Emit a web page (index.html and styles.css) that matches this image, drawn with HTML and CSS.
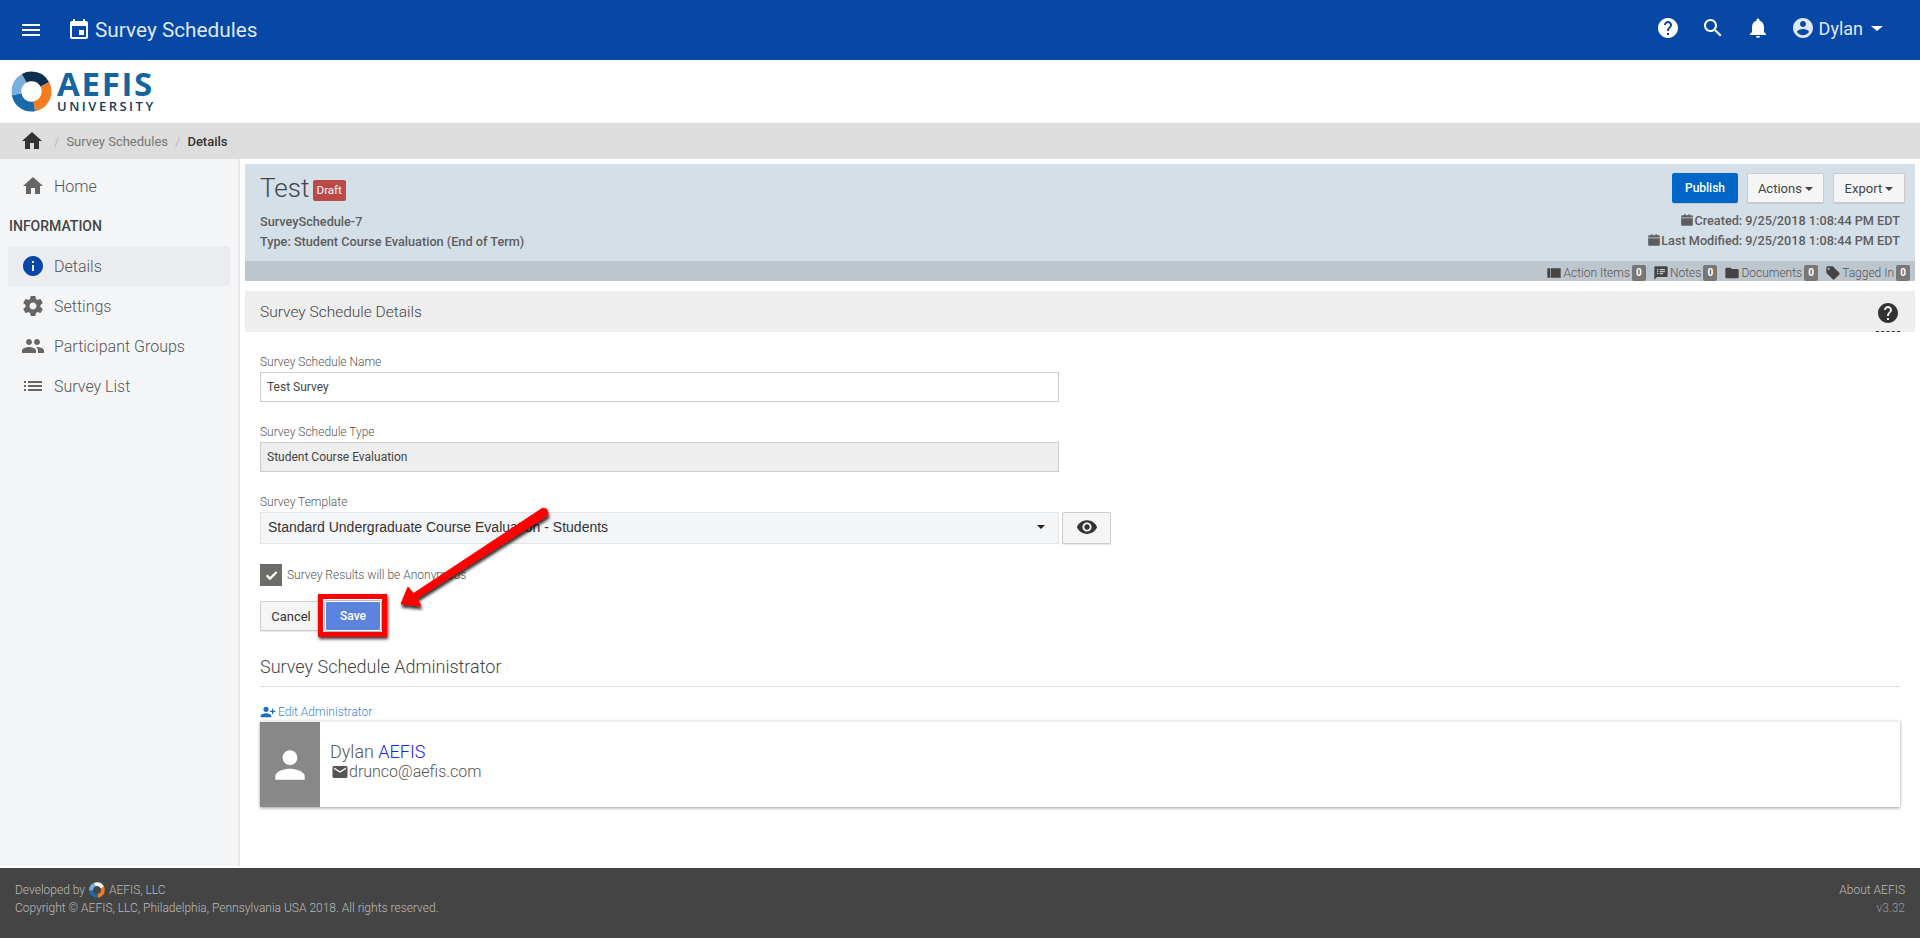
FILE: index.html
```html
<!DOCTYPE html>
<html lang="en">
<head>
    <meta charset="UTF-8">
    <meta name="viewport" content="width=device-width, initial-scale=1.0">
    <title>Survey Schedules</title>
    <link rel="stylesheet" href="styles.css">
</head>
<body>
    <svg class="icon-defs" aria-hidden="true">
        <symbol id="i-menu" viewBox="0 0 24 24"><path d="M3 18h18v-2H3v2zm0-5h18v-2H3v2zm0-7v2h18V6H3z"/></symbol>
        <symbol id="i-event" viewBox="0 0 24 24"><path d="M17 12h-5v5h5v-5zM16 1v2H8V1H6v2H5c-1.11 0-1.99.9-1.99 2L3 19c0 1.1.89 2 2 2h14c1.1 0 2-.9 2-2V5c0-1.1-.9-2-2-2h-1V1h-2zm3 18H5V8h14v11z"/></symbol>
        <symbol id="i-help" viewBox="0 0 24 24"><path d="M12 2C6.48 2 2 6.48 2 12s4.48 10 10 10 10-4.48 10-10S17.52 2 12 2zm1 17h-2v-2h2v2zm2.07-7.75l-.9.92C13.45 12.9 13 13.5 13 15h-2v-.5c0-1.1.45-2.1 1.17-2.83l1.24-1.26c.37-.36.59-.86.59-1.41 0-1.1-.9-2-2-2s-2 .9-2 2H8c0-2.21 1.79-4 4-4s4 1.79 4 4c0 .88-.36 1.68-.93 2.25z"/></symbol>
        <symbol id="i-search" viewBox="0 0 24 24"><path d="M15.5 14h-.79l-.28-.27C15.41 12.59 16 11.11 16 9.5 16 5.91 13.09 3 9.5 3S3 5.91 3 9.5 5.91 16 9.5 16c1.61 0 3.09-.59 4.23-1.57l.27.28v.79l5 4.99L20.49 19l-4.99-5zm-6 0C7.01 14 5 11.99 5 9.5S7.01 5 9.5 5 14 7.01 14 9.5 11.99 14 9.5 14z"/></symbol>
        <symbol id="i-bell" viewBox="0 0 24 24"><path d="M12 22c1.1 0 2-.9 2-2h-4c0 1.1.89 2 2 2zm6-6v-5c0-3.07-1.64-5.64-4.5-6.32V4c0-.83-.67-1.5-1.5-1.5s-1.5.67-1.5 1.5v.68C7.63 5.36 6 7.92 6 11v5l-2 2v1h16v-1l-2-2z"/></symbol>
        <symbol id="i-account" viewBox="0 0 24 24"><path d="M12 2C6.48 2 2 6.48 2 12s4.48 10 10 10 10-4.48 10-10S17.52 2 12 2zm0 3c1.66 0 3 1.34 3 3s-1.34 3-3 3-3-1.34-3-3 1.34-3 3-3zm0 14.2c-2.5 0-4.71-1.28-6-3.22.03-1.99 4-3.08 6-3.08 1.99 0 5.97 1.09 6 3.08-1.29 1.94-3.5 3.22-6 3.22z"/></symbol>
        <symbol id="i-home" viewBox="0 0 24 24"><path d="M10 20v-6h4v6h5v-8h3L12 3 2 12h3v8z"/></symbol>
        <symbol id="i-info" viewBox="0 0 24 24"><path d="M12 2C6.48 2 2 6.48 2 12s4.48 10 10 10 10-4.48 10-10S17.52 2 12 2zm1 15h-2v-6h2v6zm0-8h-2V7h2v2z"/></symbol>
        <symbol id="i-gear" viewBox="0 0 24 24"><path d="M19.43 12.98c.04-.32.07-.64.07-.98s-.03-.66-.07-.98l2.11-1.65c.19-.15.24-.42.12-.64l-2-3.46c-.12-.22-.39-.3-.61-.22l-2.49 1c-.52-.4-1.08-.73-1.69-.98l-.38-2.65C14.46 2.18 14.25 2 14 2h-4c-.25 0-.46.18-.49.42l-.38 2.65c-.61.25-1.17.59-1.69.98l-2.49-1c-.23-.09-.49 0-.61.22l-2 3.46c-.13.22-.07.49.12.64l2.11 1.65c-.04.32-.07.65-.07.98s.03.66.07.98l-2.11 1.65c-.19.15-.24.42-.12.64l2 3.46c.12.22.39.3.61.22l2.49-1c.52.4 1.08.73 1.69.98l.38 2.65c.03.24.24.42.49.42h4c.25 0 .46-.18.49-.42l.38-2.65c.61-.25 1.17-.59 1.69-.98l2.49 1c.23.09.49 0 .61-.22l2-3.46c.12-.22.07-.49-.12-.64l-2.11-1.65zM12 15.5c-1.93 0-3.5-1.57-3.5-3.5s1.57-3.5 3.5-3.5 3.5 1.57 3.5 3.5-1.57 3.5-3.5 3.5z"/></symbol>
        <symbol id="i-people" viewBox="0 0 24 24"><path d="M16 11c1.66 0 2.99-1.34 2.99-3S17.66 5 16 5c-1.66 0-3 1.34-3 3s1.34 3 3 3zm-8 0c1.66 0 2.99-1.34 2.99-3S9.66 5 8 5C6.34 5 5 6.34 5 8s1.34 3 3 3zm0 2c-2.33 0-7 1.17-7 3.5V19h14v-2.5c0-2.33-4.67-3.5-7-3.5zm8 0c-.29 0-.62.02-.97.05 1.16.84 1.97 1.97 1.97 3.45V19h6v-2.5c0-2.33-4.67-3.5-7-3.5z"/></symbol>
        <symbol id="i-list" viewBox="0 0 24 24"><path d="M3 13h2v-2H3v2zm0 4h2v-2H3v2zm0-8h2V7H3v2zm4 4h14v-2H7v2zm0 4h14v-2H7v2zM7 7v2h14V7H7z"/></symbol>
        <symbol id="i-person" viewBox="0 0 24 24"><path d="M12 12c2.21 0 4-1.79 4-4s-1.79-4-4-4-4 1.79-4 4 1.79 4 4 4zm0 2c-2.67 0-8 1.34-8 4v2h16v-2c0-2.66-5.33-4-8-4z"/></symbol>
        <symbol id="i-person-add" viewBox="0 0 24 24"><path d="M9 12c-2.21 0-4-1.79-4-4s1.79-4 4-4 4 1.79 4 4-1.79 4-4 4zm9-2V7h2v3h3v2h-3v3h-2v-3h-3v-2h3zM9 14c2.67 0 8 1.34 8 4v2H1v-2c0-2.66 5.33-4 8-4z"/></symbol>
        <symbol id="i-mail" viewBox="0 0 24 24"><path d="M20 4H4c-1.1 0-1.99.9-1.99 2L2 18c0 1.1.9 2 2 2h16c1.1 0 2-.9 2-2V6c0-1.1-.9-2-2-2zm0 4l-8 5-8-5V6l8 5 8-5v2z"/></symbol>
        <symbol id="i-eye" viewBox="0 0 24 24"><path d="M12 4.5C7 4.5 2.73 7.61 1 12c1.73 4.39 6 7.5 11 7.5s9.27-3.11 11-7.5c-1.73-4.39-6-7.5-11-7.5zM12 17c-2.76 0-5-2.24-5-5s2.24-5 5-5 5 2.24 5 5-2.24 5-5 5zm0-8c-1.66 0-3 1.34-3 3s1.34 3 3 3 3-1.34 3-3-1.34-3-3-3z"/></symbol>
        <symbol id="i-tag" viewBox="0 0 24 24"><path d="M21.41 11.58l-9-9C12.05 2.22 11.55 2 11 2H4c-1.1 0-2 .9-2 2v7c0 .55.22 1.05.59 1.42l9 9c.36.36.86.58 1.41.58.55 0 1.05-.22 1.41-.59l7-7c.37-.36.59-.86.59-1.41 0-.55-.23-1.06-.59-1.42zM5.5 7C4.67 7 4 6.33 4 5.5S4.67 4 5.5 4 7 4.67 7 5.5 6.33 7 5.5 7z"/></symbol>
        <symbol id="i-folder" viewBox="0 0 24 24"><path d="M10 4H4c-1.1 0-1.99.9-1.99 2L2 18c0 1.1.9 2 2 2h16c1.1 0 2-.9 2-2V8c0-1.1-.9-2-2-2h-8l-2-2z"/></symbol>
        <symbol id="i-notes" viewBox="0 0 24 24"><path d="M20 2H4c-1.1 0-1.99.9-1.99 2L2 22l4-4h14c1.1 0 2-.9 2-2V4c0-1.1-.9-2-2-2zM8 14H6v-2h2v2zm0-3H6V9h2v2zm0-3H6V6h2v2zm7 6h-5v-2h5v2zm3-3h-8V9h8v2zm0-3h-8V6h8v2z"/></symbol>
        <symbol id="i-book" viewBox="0 0 24 24"><path d="M2 5h4v14H2zM7 5h15v14H7z"/></symbol>
        <symbol id="i-cal" viewBox="0 0 24 24"><path d="M2 9h20v11c0 1.1-.9 2-2 2H4c-1.1 0-2-.9-2-2V9zM7 2h2.5v2h5V2H17v2h3c1.1 0 2 .9 2 2v1.5H2V6c0-1.1.9-2 2-2h3V2z"/></symbol>
        <symbol id="i-check" viewBox="0 0 24 24"><path d="M9.5 19.5L3 13l2.5-2.5 4 4L19 5l2.500 2.500z"/></symbol>
    </svg>

    <header class="topbar">
        <svg class="icon topbar-menu"><use href="#i-menu"/></svg>
        <svg class="icon topbar-event"><use href="#i-event"/></svg>
        <span class="topbar-title">Survey Schedules</span>
        <div class="topbar-tools">
            <svg class="icon"><use href="#i-help"/></svg>
            <svg class="icon"><use href="#i-search"/></svg>
            <svg class="icon"><use href="#i-bell"/></svg>
            <div class="user">
                <svg class="icon"><use href="#i-account"/></svg>
                <span>Dylan</span>
                <span class="caret"></span>
            </div>
        </div>
    </header>

    <div class="brand">
        <svg class="brand-mark" viewBox="0 0 42 42">
            <circle class="ring ring-orange" cx="21" cy="21" r="15.5" pathLength="100" stroke-dasharray="30 70" stroke-dashoffset="-17"/>
            <circle class="ring ring-blue" cx="21" cy="21" r="15.5" pathLength="100" stroke-dasharray="25 75" stroke-dashoffset="-47"/>
            <circle class="ring ring-light" cx="21" cy="21" r="15.5" pathLength="100" stroke-dasharray="20 80" stroke-dashoffset="-72"/>
            <circle class="ring ring-dark" cx="21" cy="21" r="15.5" pathLength="100" stroke-dasharray="25 75" stroke-dashoffset="-92"/>
        </svg>
        <div class="brand-text">
            <div class="brand-name">AEFIS</div>
            <div class="brand-sub">UNIVERSITY</div>
        </div>
    </div>

    <nav class="crumbs">
        <svg class="icon crumb-home"><use href="#i-home"/></svg>
        <span class="crumb-sep">/</span>
        <span class="crumb-link">Survey Schedules</span>
        <span class="crumb-sep">/</span>
        <span class="crumb-current">Details</span>
    </nav>

    <div class="layout">
        <aside class="sidebar">
            <a class="side-link"><svg class="icon"><use href="#i-home"/></svg>Home</a>
            <div class="side-title">INFORMATION</div>
            <a class="side-link active"><svg class="icon"><use href="#i-info"/></svg>Details</a>
            <a class="side-link"><svg class="icon"><use href="#i-gear"/></svg>Settings</a>
            <a class="side-link"><svg class="icon"><use href="#i-people"/></svg>Participant Groups</a>
            <a class="side-link"><svg class="icon"><use href="#i-list"/></svg>Survey List</a>
        </aside>

        <main class="content">
            <section class="record">
                <div class="record-top">
                    <div>
                        <h1 class="record-name">Test <span class="draft">Draft</span></h1>
                        <div class="record-line">SurveySchedule-7</div>
                        <div class="record-line">Type: Student Course Evaluation (End of Term)</div>
                    </div>
                    <div class="record-right">
                        <div class="record-actions">
                            <button class="btn btn-publish">Publish</button>
                            <button class="btn btn-actions">Actions <span class="caret"></span></button>
                            <button class="btn btn-export">Export <span class="caret"></span></button>
                        </div>
                        <div class="record-line"><svg class="icon"><use href="#i-cal"/></svg>Created: 9/25/2018 1:08:44 PM EDT</div>
                        <div class="record-line"><svg class="icon"><use href="#i-cal"/></svg>Last Modified: 9/25/2018 1:08:44 PM EDT</div>
                    </div>
                </div>
                <div class="record-strip">
                    <span class="strip-item"><svg class="icon"><use href="#i-book"/></svg>Action Items<b class="count">0</b></span>
                    <span class="strip-item"><svg class="icon"><use href="#i-notes"/></svg>Notes<b class="count">0</b></span>
                    <span class="strip-item"><svg class="icon"><use href="#i-folder"/></svg>Documents<b class="count">0</b></span>
                    <span class="strip-item"><svg class="icon"><use href="#i-tag"/></svg>Tagged In<b class="count">0</b></span>
                </div>
            </section>

            <div class="section-head">
                <span>Survey Schedule Details</span>
                <span class="section-help"><svg class="icon"><use href="#i-help"/></svg></span>
            </div>

            <form class="details">
                <label class="field-label">Survey Schedule Name</label>
                <div class="field">Test Survey</div>
                <label class="field-label">Survey Schedule Type</label>
                <div class="field field-off">Student Course Evaluation</div>
                <label class="field-label">Survey Template</label>
                <div class="select-row">
                    <div class="select">Standard Undergraduate Course Evaluation - Students<span class="caret"></span></div>
                    <button type="button" class="btn btn-eye"><svg class="icon"><use href="#i-eye"/></svg></button>
                </div>
                <div class="check-row">
                    <span class="check"><svg class="icon"><use href="#i-check"/></svg></span>
                    <span>Survey Results will be Anonymous</span>
                </div>
                <div class="form-buttons">
                    <button type="button" class="btn">Cancel</button>
                    <span class="save-mark"><button type="button" class="btn btn-save">Save</button></span>
                </div>
            </form>

            <section class="admin">
                <h2 class="admin-title">Survey Schedule Administrator</h2>
                <a class="admin-edit"><svg class="icon"><use href="#i-person-add"/></svg>Edit Administrator</a>
                <div class="admin-card">
                    <div class="avatar"><svg class="icon"><use href="#i-person"/></svg></div>
                    <div class="admin-info">
                        <div class="admin-name">Dylan <a>AEFIS</a></div>
                        <div class="admin-mail"><svg class="icon"><use href="#i-mail"/></svg>drunco@aefis.com</div>
                    </div>
                </div>
            </section>
        </main>
    </div>

    <footer class="footer">
        <div>
            <div class="dev">Developed by
                <svg class="footer-mark" viewBox="0 0 42 42">
                    <circle class="ring ring-orange" cx="21" cy="21" r="15.5" pathLength="100" stroke-dasharray="30 70" stroke-dashoffset="-17"/>
                    <circle class="ring ring-blue" cx="21" cy="21" r="15.5" pathLength="100" stroke-dasharray="25 75" stroke-dashoffset="-47"/>
                    <circle class="ring ring-light" cx="21" cy="21" r="15.5" pathLength="100" stroke-dasharray="20 80" stroke-dashoffset="-72"/>
                    <circle class="ring ring-white" cx="21" cy="21" r="15.5" pathLength="100" stroke-dasharray="25 75" stroke-dashoffset="-92"/>
                </svg>
                AEFIS, LLC</div>
            <div>Copyright © AEFIS, LLC, Philadelphia, Pennsylvania USA 2018. All rights reserved.</div>
        </div>
        <div class="footer-right">
            <div>About AEFIS</div>
            <div class="version">v3.32</div>
        </div>
    </footer>

    <!-- annotation drawn on top of the screenshot -->
    <svg class="arrow" viewBox="0 0 170 120">
        <defs>
            <filter id="arrow-shadow" x="-20%" y="-20%" width="140%" height="140%">
                <feDropShadow dx="1" dy="3" stdDeviation="1.5" flood-color="#000" flood-opacity="0.8"/>
            </filter>
        </defs>
        <g filter="url(#arrow-shadow)">
            <polygon points="6,104 13,87 18.5,93.500 147.500,8.200 151.500,9 153,13 152.300,15.800 22,98.500 26,106" fill="#f00" stroke="#f00" stroke-width="1" stroke-linejoin="round"/>
        </g>
    </svg>
</body>
</html>
```

FILE: styles.css
```css
* {
    box-sizing: border-box;
}
html, body {
    margin: 0;
    padding: 0;
}
body {
    position: relative;
    display: flex;
    flex-direction: column;
    height: 938px;
    overflow: hidden;
    font-family: Roboto, "Liberation Sans", sans-serif;
    font-size: 12px;
    color: #555;
    background: #fff;
}
.icon-defs {
    display: none;
}
.icon {
    display: inline-block;
    width: 24px;
    height: 24px;
    fill: currentColor;
    flex: none;
}
.caret {
    display: inline-block;
    width: 0;
    height: 0;
    border-left: 4px solid transparent;
    border-right: 4px solid transparent;
    border-top: 4px solid currentColor;
    vertical-align: middle;
}

/* top bar */
.topbar {
    display: flex;
    align-items: center;
    height: 60px;
    flex: none;
    padding: 0 37px 0 19px;
    background: #0747a6;
    color: #fff;
}
.topbar-menu {
    margin-right: 24px;
}
.topbar-event {
    margin-right: 4px;
}
.topbar-title {
    font-size: 20.8px;
    color: #dfe8f6;
}
.topbar-tools {
    display: flex;
    align-items: center;
    gap: 21px;
    margin-left: auto;
    margin-top: -4px;
}
.user {
    display: flex;
    align-items: center;
    gap: 4px;
    font-size: 18px;
    color: #dfe8f6;
}
.user .caret {
    margin-left: 4px;
    border-left-width: 6px;
    border-right-width: 6px;
    border-top-width: 5px;
    color: #fff;
}

/* logo row */
.brand {
    display: flex;
    align-items: center;
    height: 63px;
    flex: none;
    padding-left: 11px;
    gap: 5px;
}
.brand-mark {
    width: 41px;
    height: 41px;
}
.brand-text {
    margin-top: -2px;
}
.footer-mark {
    width: 16px;
    height: 16px;
    margin: 0 1px;
    vertical-align: -4px;
}
.ring {
    fill: none;
    stroke-width: 10;
    transform: rotate(-90deg);
    transform-origin: center;
}
.ring-light {
    stroke: #7aaddb;
}
.ring-dark {
    stroke: #0c2f50;
}
.ring-orange {
    stroke: #f47b20;
}
.ring-blue {
    stroke: #1a6aab;
}
.ring-white {
    stroke: #fff;
}
.brand-name {
    font-family: "Open Sans", sans-serif;
    font-weight: 700;
    font-size: 33px;
    line-height: 30px;
    letter-spacing: 1.7px;
    color: #14659f;
}
.brand-sub {
    font-family: "Open Sans", sans-serif;
    font-weight: 600;
    font-size: 13px;
    line-height: 14px;
    letter-spacing: 2.5px;
    color: #123b5c;
}

/* breadcrumb */
.crumbs {
    display: flex;
    align-items: center;
    height: 36px;
    flex: none;
    padding-left: 20px;
    background: #ddd;
    font-size: 13px;
    color: #777;
}
.crumb-home {
    width: 24px;
    height: 24px;
    color: #333;
    margin-right: 3px;
}
.crumb-sep {
    color: #bbb;
    margin: 0 7px;
}
.crumb-current {
    color: #333;
    font-weight: 500;
}

/* sidebar */
.layout {
    display: flex;
    flex: 1;
    min-height: 0;
}
.sidebar {
    width: 240px;
    flex: none;
    margin-bottom: 2px;
    padding: 7px 8px;
    background: #f3f5f7;
    border-right: 2px solid #e8e8e8;
}
.side-link {
    display: flex;
    align-items: center;
    height: 40px;
    padding-left: 13px;
    gap: 9px;
    border-radius: 3px;
    font-size: 16px;
    font-weight: 300;
    color: #555;
}
.side-link .icon {
    color: #666;
}
.side-link.active {
    background: #ebecef;
}
.side-link.active .icon {
    color: #0747a6;
}
.side-title {
    margin: 12px 0 12px;
    padding-left: 1px;
    font-size: 14px;
    line-height: 16px;
    font-weight: 500;
    color: #444;
}

/* record header */
.content {
    flex: 1;
    min-width: 0;
    padding: 5px 5px 0;
}
.record {
    background: #d5dfe8;
}
.record-top {
    display: flex;
    justify-content: space-between;
    height: 97px;
    padding: 0 15px;
}
.record-name {
    margin: 7px 0 7px;
    font-size: 26px;
    line-height: 34px;
    font-weight: 300;
    color: #444;
}
.draft {
    display: inline-block;
    height: 21px;
    margin-left: -3px;
    padding: 0 4px;
    border-radius: 2px;
    background: #b94a48;
    color: #fff;
    font-size: 11.5px;
    font-weight: 400;
    line-height: 21px;
    vertical-align: 3px;
}
.record-line {
    font-size: 12.7px;
    font-weight: 500;
    line-height: 20px;
    color: #5d5d5d;
}
.record-line .icon {
    width: 14px;
    height: 14px;
    vertical-align: -2px;
}
.record-right {
    text-align: right;
    padding-top: 9px;
}
.record-actions {
    display: flex;
    justify-content: flex-end;
    gap: 9px;
    margin: 0 -5px 8px 0;
}
.btn {
    height: 30px;
    padding: 0 13px;
    border: 1px solid #ccc;
    border-radius: 2px;
    background: #f5f5f5;
    font-family: inherit;
    font-size: 13px;
    color: #444;
    box-shadow: 0 1px 1px rgba(0, 0, 0, 0.1);
}
.btn-publish {
    width: 66px;
    padding: 0;
    border-color: #0067c8;
    background: #0067c8;
    color: #fff;
    font-size: 12px;
    font-weight: 500;
}
.btn-actions {
    width: 77px;
    padding: 0;
}
.btn-export {
    width: 72px;
    padding: 0;
}
.record-strip {
    display: flex;
    justify-content: flex-end;
    align-items: center;
    gap: 7px;
    height: 20px;
    padding: 3px 5px 0 0;
    background: #bdc5cd;
    font-size: 12px;
    font-weight: 300;
    color: #555;
}
.strip-item {
    display: flex;
    align-items: center;
}
.strip-item .icon {
    width: 16px;
    height: 16px;
    margin-right: 1px;
    color: #444;
}
.count {
    min-width: 14px;
    height: 16px;
    margin-left: 2px;
    border-radius: 2px;
    background: #777;
    color: #fff;
    font-size: 10px;
    font-weight: 700;
    line-height: 16px;
    text-align: center;
}

/* details form */
.section-head {
    display: flex;
    align-items: center;
    justify-content: space-between;
    height: 41px;
    margin-top: 10px;
    padding: 0 15px;
    background: #eee;
    font-size: 15.5px;
    font-weight: 300;
    color: #444;
}
.section-help {
    display: flex;
    width: 24px;
    height: 38px;
    margin-top: 3px;
    padding-top: 7px;
    border-bottom: 1px dashed #333;
    color: #333;
}
.details {
    padding: 22px 15px 0;
}
.field-label {
    display: block;
    height: 18px;
    font-size: 12px;
    font-weight: 300;
    line-height: 16px;
    color: #555;
}
.field {
    width: 799px;
    height: 30px;
    margin-bottom: 22px;
    padding-left: 6px;
    border: 1px solid #ccc;
    font-size: 12px;
    line-height: 28px;
    color: #444;
}
.field-off {
    background: #eee;
}
.select-row {
    display: flex;
    gap: 3px;
    margin-bottom: 20px;
}
.select {
    display: flex;
    align-items: center;
    justify-content: space-between;
    width: 799px;
    height: 32px;
    padding: 0 13px 2px 7px;
    border: 1px solid #e3e4e6;
    background: #f3f5f7;
    font-family: "Liberation Sans", Arial, sans-serif;
    font-size: 14px;
    color: #333;
}
.select .caret {
    color: #222;
}
.btn-eye {
    width: 49px;
    height: 32px;
    padding: 0 0 2px;
    color: #333;
}
.btn-eye .icon {
    width: 22px;
    height: 22px;
    vertical-align: middle;
}
.check-row {
    display: flex;
    align-items: center;
    gap: 5px;
    font-size: 12px;
    font-weight: 300;
    color: #555;
}
.check {
    display: flex;
    align-items: center;
    justify-content: center;
    width: 22px;
    height: 22px;
    background: #6e6c69;
    color: #fff;
}
.check .icon {
    width: 15px;
    height: 15px;
}
.form-buttons {
    display: flex;
    gap: 3px;
    margin-top: 15px;
}
.form-buttons .btn {
    width: 62px;
    padding: 0;
    color: #333;
}
.save-mark {
    position: relative;
    display: flex;
}
.form-buttons .btn-save {
    width: 56px;
    border: 1px solid #fff;
    outline: 1px solid #a9b9dc;
    background: #5b82dd;
    color: #fff;
    font-size: 12px;
    font-weight: 500;
}
.save-mark::after {
    content: "";
    position: absolute;
    left: -7px;
    right: -6px;
    top: -7px;
    bottom: -6px;
    border: 5px solid #f00;
    box-shadow: 1px 2px 3px rgba(0, 0, 0, 0.8);
}

/* administrator */
.admin {
    padding: 25px 15px 0;
}
.admin-title {
    margin: 0;
    padding-bottom: 8px;
    border-bottom: 1px solid #ddd;
    font-size: 18px;
    line-height: 22px;
    font-weight: 300;
    color: #444;
}
.admin-edit {
    display: flex;
    align-items: center;
    height: 16px;
    margin-top: 17px;
    font-size: 12px;
    font-weight: 300;
    color: #3f85c9;
}
.admin-edit .icon {
    width: 16px;
    height: 16px;
    margin-right: 2px;
    color: #1a6fbe;
}
.admin-card {
    display: flex;
    height: 86px;
    margin-top: 1px;
    border-top: 1px solid #eee;
    box-shadow: 0 1px 3px rgba(0, 0, 0, 0.4);
}
.avatar {
    display: flex;
    align-items: center;
    justify-content: center;
    width: 60px;
    background: #888;
    color: #fff;
}
.avatar .icon {
    width: 44px;
    height: 44px;
}
.admin-info {
    padding: 19px 0 0 10px;
}
.admin-name {
    font-size: 18px;
    line-height: 22px;
    font-weight: 300;
    color: #555;
}
.admin-name a {
    color: #2222ee;
}
.admin-mail {
    display: flex;
    align-items: center;
    padding-left: 1px;
    font-size: 16px;
    line-height: 18px;
    font-weight: 300;
    color: #555;
}
.admin-mail .icon {
    width: 18px;
    height: 18px;
}

/* footer */
.footer {
    display: flex;
    justify-content: space-between;
    height: 70px;
    flex: none;
    padding: 13px 15px 0;
    background: #444;
    font-size: 12px;
    font-weight: 300;
    line-height: 18px;
    color: #bbb;
}
.footer-right {
    text-align: right;
}
.version {
    color: #999;
}

.arrow {
    position: absolute;
    left: 395px;
    top: 500px;
    width: 170px;
    height: 120px;
}
```
